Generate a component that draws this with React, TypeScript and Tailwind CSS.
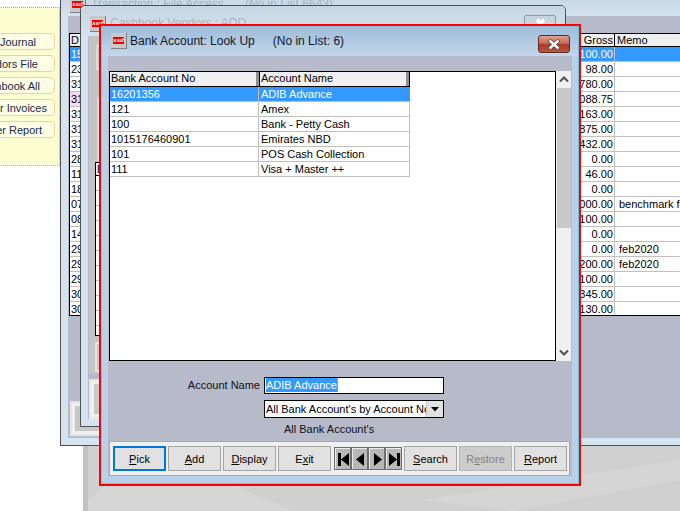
import React from "react";

const Logo = () => (
  <div className="w-4 h-4 shrink-0 bg-[#c8c8c8] border-r border-b border-[#808080] flex items-center justify-center">
    <div className="w-[11px] h-[7px] bg-[#f00000] text-white text-[6px] leading-[7px] font-bold italic text-center overflow-hidden">ssd</div>
  </div>
);

const leftButtons = [
  { t: "Journal", c: "pr-[18px]" },
  { t: "dors File", c: "pr-[16px]" },
  { t: "hbook All", c: "pr-[14px]" },
  { t: "or Invoices", c: "pr-[7px]" },
  { t: "er Report", c: "pr-[12px]" },
];

const dates = ["15", "23", "31", "31", "31", "31", "31", "28", "11", "18", "07", "08", "14", "29", "29", "29", "30", "30"];
const gross = ["100.00", "98.00", "780.00", "088.75", "163.00", "875.00", "432.00", "0.00", "46.00", "0.00", "000.00", "100.00", "0.00", "0.00", "200.00", "100.00", "345.00", "130.00"];
const memo: Record<number, string> = { 10: "benchmark foods", 13: "feb2020", 14: "feb2020" };

const accounts = [
  ["16201356", "ADIB Advance"],
  ["121", "Amex"],
  ["100", "Bank - Petty Cash"],
  ["1015176460901", "Emirates NBD"],
  ["101", "POS Cash Collection"],
  ["111", "Visa + Master ++"],
];

const Btn = ({ pre, u, post, focus, disabled }: { pre?: string; u: string; post?: string; focus?: boolean; disabled?: boolean }) => (
  <div
    className={
      "w-[53px] h-[25px] flex items-center justify-center shrink-0 pt-px " +
      (focus ? "border-2 border-[#0078d7] bg-[#e1e1e1] text-black" : disabled ? "border border-[#b4b4b4] bg-[#cccccc] text-[#838383]" : "border border-[#a4a4a4] bg-[#e1e1e1] text-black")
    }
  >
    <span>
      {pre}
      <span className="underline">{u}</span>
      {post}
    </span>
  </div>
);

const Nav = ({ d }: { d: string }) => (
  <div className="w-[17px] h-[23px] border border-[#6e6e6e]">
    <div className="w-full h-full bg-[#b8b8b8] border-t border-l border-[#ececec] flex items-center justify-center">
      <svg width="13" height="15" viewBox="0 0 13 15" fill="black"><path d={d} /></svg>
    </div>
  </div>
);

export default function App() {
  return (
    <div className="relative w-[680px] h-[511px] bg-white overflow-hidden font-['Liberation_Sans',sans-serif] text-[11px] leading-[15px] text-black">
      {/* desktop wallpaper */}
      <div className="absolute left-[83px] top-[440px] w-[597px] h-[71px] bg-[#d0d0d0]">
        <svg width="597" height="71" className="block">
          <path d="M0 0 L5 0 L5 71 L0 71 Z" fill="#c2c2c2" />
          <path d="M5 60 L70 10 L210 71 L5 71 Z" fill="#d6d6d6" />
          <path d="M340 60 L597 20 L597 40 L430 71 Z" fill="#d5d5d5" />
        </svg>
      </div>

      {/* yellow shortcuts panel */}
      <div className="absolute left-[-2px] top-[7px] w-[62px] h-[159px] bg-[#fdfdd2] border border-dotted border-[#a8a88c] pt-[25px] flex flex-col gap-[5px] overflow-hidden">
        {leftButtons.map((b) => (
          <div key={b.t} className={"ml-[-20px] w-[76px] h-[17px] shrink-0 rounded-[5px] border border-[#d8d8a8] bg-[#fefee4] flex items-center justify-end pt-px text-[#1a2a4a] " + b.c}>
            {b.t}
          </div>
        ))}
      </div>

      {/* Transaction window */}
      <div className="absolute left-[60px] top-[-8px] w-[640px] h-[454px] border border-[#505050] bg-[#d5e2f0] overflow-hidden">
        <div className="h-[23px] flex items-center gap-[5px] pl-[9px] bg-gradient-to-b from-[#c4d4e4] to-[#d5e2ef] text-[12px] text-[#aab4c0]">
          <Logo />
          <span>Transaction : File Access</span>
          <span className="ml-[16px]">(No in List 6643)</span>
        </div>
        <div className="ml-[7px] h-[422px] bg-[#b7bac8] pt-[17px] pl-px">
          <div className="w-[620px] h-[283px] bg-white border border-black overflow-hidden">
            <div className="h-[13px] flex bg-[#f0f0f0] border-b border-black leading-[12px]">
              <div className="w-[545px] shrink-0 pl-px pr-px border-r border-black flex justify-between">
                <span>D</span>
                <span>Gross</span>
              </div>
              <div className="pl-[2px]">Memo</div>
            </div>
            {dates.map((d, i) => (
              <div key={i} className={"h-[15px] flex border-b border-[#c0c0c0] " + (i === 0 ? "bg-[#3399ff] text-white" : "")}>
                <div className={"w-[545px] shrink-0 pl-px pr-px flex justify-between border-r border-[#c0c0c0] " + (i === 3 ? "bg-[linear-gradient(90deg,#f6d9f2_0,#f6d9f2_60px,white_60px)]" : "")}>
                  <span>{d}</span>
                  <span>{gross[i]}</span>
                </div>
                <div className="pl-[4px] whitespace-nowrap">{memo[i]}</div>
              </div>
            ))}
          </div>
          <div className="mt-[85px] ml-px w-[300px] h-[35px] border-2 border-[#e4e4e4] bg-[#f0f0f0] p-[3px]">
            <div className="w-full h-full bg-[#c8c8c8]" />
          </div>
        </div>
      </div>

      {/* Cashbook window */}
      <div className="absolute left-[80px] top-[5px] w-[486px] h-[422px] border border-[#505050] rounded-t-[5px] bg-[#d5e2f0] overflow-hidden">
        <div className="h-[30px] flex items-start gap-[4px] pl-[9px] pt-[10px] bg-gradient-to-b from-[#c8d6e4] to-[#d5e2ef] text-[12px] text-[#aab4c0]">
          <Logo />
          <span>Cashbook Vendors : ADD</span>
          <div className="ml-auto mr-[9px] mt-[-1px] w-[32px] h-[18px] rounded-[2px] border border-[#8c9cac] bg-[#c8d4e0] flex items-start justify-center text-white text-[13px] leading-[15px] font-bold">✖</div>
        </div>
        <div className="ml-[7px] h-[383px] bg-[#b7bac8]">
          <div className="ml-px h-[338px] bg-[#c4c4c4] pt-[9px] pl-[6px]">
            <div className="w-[100px] h-[25px] border-2 border-[#dcdcdc] ml-px" />
            <div className="w-[100px] h-[64px] border-2 border-[#dcdcdc] ml-[2px] mt-[27px]" />
            <div className="w-[100px] h-[174px] mt-px bg-white border border-black">
              <div className="h-[13px] bg-[#f0f0f0] border-b border-black pl-px leading-[12px]">D</div>
              {Array.from({ length: 11 }).map((_, i) => (
                <div key={i} className="h-[15px] border-b border-[#c0c0c0]" />
              ))}
            </div>
            <div className="w-[100px] h-[30px] mt-[6px] border-2 border-[#e4e4e4] bg-[#c8c8c8]" />
          </div>
          <div className="mt-[5px] ml-px w-[300px] h-[40px] border-2 border-[#e8e8e8] bg-[#f0f0f0] p-[3px]">
            <div className="w-full h-full bg-[#c8c8c8]" />
          </div>
        </div>
      </div>

      {/* Bank Account dialog */}
      <div className="absolute left-[99px] top-[24px] w-[482px] h-[462px] border-2 border-[#ff0000] bg-[#b8d0e8]">
        <div className="w-full h-full border-r border-b border-[#5ec8ea] flex flex-col">
          <div className="h-[30px] shrink-0 relative flex items-center pl-[10px] bg-gradient-to-b from-[#9dbbd9] to-[#c4d7ea] text-[#101828] text-[12px]">
            <Logo />
            <span className="ml-[3px]">Bank Account: Look Up</span>
            <span className="ml-[18px]">(No in List: 6)</span>
            <div className="absolute left-[437px] top-[9px] w-[32px] h-[18px] rounded-[3px] border border-[#5a2c2c] bg-[linear-gradient(180deg,#e0a090_0,#c86a55_45%,#a83a22_55%,#b85a3c_100%)] flex items-center justify-center">
              <svg width="14" height="11" viewBox="0 0 14 11">
                <path d="M2 1 L12 10 M12 1 L2 10" stroke="#4a4a4a" strokeWidth="4" />
                <path d="M2.5 1.5 L11.5 9.5 M11.5 1.5 L2.5 9.5" stroke="white" strokeWidth="2.4" />
              </svg>
            </div>
          </div>
          <div className="ml-[7px] w-[464px] h-[420px] bg-[#b7bac8] pt-[15px]">
            <div className="ml-px w-[462px] h-[290px] flex">
              <div className="w-[447px] h-full bg-white border border-black">
                <div className="w-[300px] h-[15px] flex bg-[#f0f0f0] border-r border-b border-black leading-[13px]">
                  <div className="w-[149px] pl-px border-r-[3px] border-r-[#909090]">Bank Account No</div>
                  <div className="flex-1 pl-px border-l border-black border-r-[3px] border-r-[#909090]">Account Name</div>
                </div>
                {accounts.map(([a, b], i) => (
                  <div key={a} className={"w-[300px] h-[15px] flex border-b border-[#c0c0c0] " + (i === 0 ? "bg-[#3399ff] text-white" : "border-r border-r-[#c0c0c0]")}>
                    <div className="w-[149px] pl-px border-r border-[#c0c0c0]">{a}</div>
                    <div className="flex-1 pl-[2px]">{b}</div>
                  </div>
                ))}
              </div>
              <div className="w-[15px] h-full bg-[#f0f0f0] flex flex-col items-center">
                <div className="h-[17px] flex items-center justify-center">
                  <svg width="10" height="7" viewBox="0 0 10 7"><path d="M1 5.5 L5 1.5 L9 5.5" fill="none" stroke="#505050" strokeWidth="2" /></svg>
                </div>
                <div className="w-[14px] h-[140px] bg-[#c8c8c8]" />
                <div className="mt-auto h-[17px] flex items-center justify-center">
                  <svg width="10" height="7" viewBox="0 0 10 7"><path d="M1 1.5 L5 5.5 L9 1.5" fill="none" stroke="#505050" strokeWidth="2" /></svg>
                </div>
              </div>
            </div>

            <div className="mt-4 flex items-center h-[16px]">
              <div className="w-[152px] text-right text-[#101020]">Account Name</div>
              <div className="ml-1 w-[180px] h-[17px] bg-white border border-black flex items-center pl-px">
                <span className="bg-[#3399ff] text-white h-[14px] leading-[14px] border-r border-[#e09030]">ADIB Advance</span>
              </div>
            </div>
            <div className="mt-[7px] ml-[156px] w-[180px] h-[18px] bg-white border border-black flex items-center relative overflow-hidden pl-px">
              <span className="whitespace-nowrap">All Bank Account's by Account No</span>
              <div className="absolute right-0 top-0 w-[17px] h-[16px] bg-[#e1e1e1] border-l border-[#c8c8c8] flex items-center justify-center">
                <svg width="8" height="5" viewBox="0 0 8 5"><path d="M0 0 H8 L4 4.5 Z" fill="black" /></svg>
              </div>
            </div>
            <div className="mt-1 ml-[176px] h-[15px] text-[#101020]">All Bank Account's</div>

            <div className="mt-[4px] ml-px w-[461px] h-[35px] bg-[#f0f0f0] border border-[#a8a8a8] pl-[3px] pt-[4px] flex gap-[2px]">
              <Btn u="P" post="ick" focus />
              <Btn u="A" post="dd" />
              <Btn u="D" post="isplay" />
              <Btn pre="E" u="x" post="it" />
              <div className="ml-px flex h-[23px] mt-px">
                <Nav d="M1 1 H4 V14 H1 Z M12 1 V14 L4 7.5 Z" />
                <Nav d="M10 1 V14 L2 7.5 Z" />
                <Nav d="M3 1 V14 L11 7.5 Z" />
                <Nav d="M1 1 V14 L9 7.5 Z M9 1 H12 V14 H9 Z" />
              </div>
              <Btn u="S" post="earch" />
              <Btn pre="R" u="e" post="store" disabled />
              <Btn u="R" post="eport" />
            </div>
          </div>
        </div>
      </div>
    </div>
  );
}
